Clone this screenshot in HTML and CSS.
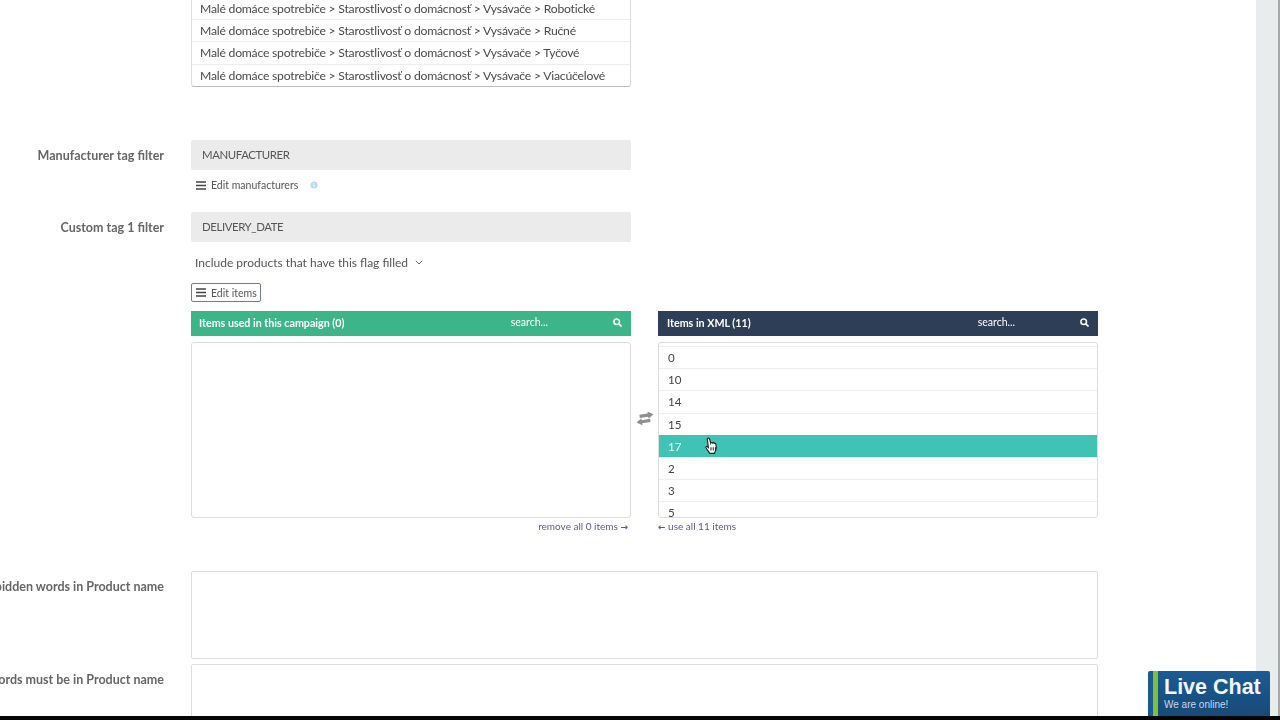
FILE: index.html
```html
<!DOCTYPE html>
<html lang="en">
<head>
	<meta charset="UTF-8">
	<title>Campaign filters</title>
	<link rel="stylesheet" href="styles.css">
</head>
<body>
<div class="screen">
	<div class="page">
		<div class="field field-cats">
			<div class="field-label"></div>
			<ul class="cat-list">
				<li>Malé domáce spotrebiče &gt; Starostlivosť o domácnosť &gt; Vysávače &gt; Robotické</li>
				<li>Malé domáce spotrebiče &gt; Starostlivosť o domácnosť &gt; Vysávače &gt; Ručné</li>
				<li>Malé domáce spotrebiče &gt; Starostlivosť o domácnosť &gt; Vysávače &gt; Tyčové</li>
				<li>Malé domáce spotrebiče &gt; Starostlivosť o domácnosť &gt; Vysávače &gt; Viacúčelové</li>
			</ul>
		</div>

		<div class="field field-manufacturer">
			<div class="field-label"><span>Manufacturer tag filter</span></div>
			<div class="field-body">
				<div class="tag-input">MANUFACTURER</div>
				<div class="edit-link">
					<svg class="icon-bars" width="10" height="9" viewBox="0 0 10 9"><path d="M0 1h10M0 4.500h10M0 8h10" stroke="#444" stroke-width="1.400"/></svg>
					<span>Edit manufacturers</span>
					<svg class="icon-info" width="8" height="8" viewBox="0 0 8 8"><circle cx="4" cy="4" r="3.500" fill="#b9dcf0"/><path d="M4 2v.8M4 3.400V6" stroke="#fff" stroke-width="1"/></svg>
				</div>
			</div>
		</div>

		<div class="field field-custom">
			<div class="field-label"><span>Custom tag 1 filter</span></div>
			<div class="field-body">
				<div class="tag-input">DELIVERY_DATE</div>
				<div class="flag-select">
					<span>Include products that have this flag filled</span>
					<svg width="8" height="5" viewBox="0 0 8 5"><path d="M.8.8L4 4l3.200-3.200" fill="none" stroke="#666" stroke-width="1"/></svg>
				</div>
				<div class="edit-btn">
					<svg class="icon-bars" width="10" height="9" viewBox="0 0 10 9"><path d="M0 1h10M0 4.500h10M0 8h10" stroke="#444" stroke-width="1.400"/></svg>
					<span>Edit items</span>
				</div>
			</div>
		</div>

		<div class="transfer">
			<div class="transfer-side">
				<div class="list-head head-green">
					<b>Items used in this campaign (0)</b>
					<span class="head-search">search...</span>
					<svg width="9" height="9" viewBox="0 0 9 9"><circle cx="3.700" cy="3.700" r="2.800" fill="none" stroke="#fff" stroke-width="1.500"/><path d="M5.800 5.800L8.500 8.500" stroke="#fff" stroke-width="1.700"/></svg>
				</div>
				<div class="list-box"></div>
				<div class="list-action action-right">remove all 0 items <span class="arrow">→</span></div>
			</div>
			<div class="transfer-mid">
				<svg width="18" height="13" viewBox="0 0 18 13"><g transform="rotate(-9 9 6.500)"><path d="M18 3.600L12.500 0v2H4v3.200h8.500v2zM0 9.200L5.500 5.600v2H14v3.200H5.500v2z" fill="#8f8f8f"/></g></svg>
			</div>
			<div class="transfer-side">
				<div class="list-head head-navy">
					<b>Items in XML (11)</b>
					<span class="head-search">search...</span>
					<svg width="9" height="9" viewBox="0 0 9 9"><circle cx="3.700" cy="3.700" r="2.800" fill="none" stroke="#fff" stroke-width="1.500"/><path d="M5.800 5.800L8.500 8.500" stroke="#fff" stroke-width="1.700"/></svg>
				</div>
				<div class="list-box">
					<ul class="item-list">
						<li>0</li>
						<li>10</li>
						<li>14</li>
						<li>15</li>
						<li class="active">17</li>
						<li>2</li>
						<li>3</li>
						<li>5</li>
					</ul>
				</div>
				<div class="list-action"><span class="arrow">←</span> use all 11 items</div>
			</div>
		</div>

		<div class="field field-words">
			<div class="field-label"><span>Forbidden words in Product name</span></div>
			<div class="word-box"></div>
		</div>
		<div class="field field-words2">
			<div class="field-label"><span>Words must be in Product name</span></div>
			<div class="word-box"></div>
		</div>
	</div>
	<div class="scroll-track"></div>
	<div class="scroll-edge"></div>

	<svg class="cursor" width="16" height="18" viewBox="0 0 14 16"><path d="M4 1.200c.8-.6 1.600 0 1.800.8l.9 3.400c.2-.7 1.300-.8 1.600 0 .3-.5 1.300-.5 1.500.2.400-.3 1.300-.2 1.500.6.400 1.500.5 3.400.1 5-.3 1.300-1 2-1.200 3.400H5.800c-.5-1.500-2-3-3.300-5-.5-.8.300-1.600 1.200-1l1 .9L3.800 2.600c-.2-.6-.2-1.100.2-1.400z" fill="#fff" stroke="#222" stroke-width="1"/><path d="M7 9v3M9 9v3M11 9v3" stroke="#222" stroke-width=".9"/></svg>

	<div class="live-chat">
		<div class="chat-title">Live Chat</div>
		<div class="chat-sub">We are online!</div>
	</div>
</div>
<div class="video-edge"></div>
</body>
</html>
```

FILE: styles.css
```css
*{
	margin: 0;
	padding: 0;
	box-sizing: border-box;
}
li{list-style: none}
body{
	width: 1280px;
	height: 720px;
	overflow: hidden;
	background: #000;
	font-family: "Lato", "Liberation Sans", sans-serif;
	font-size: 12px;
	color: #555;
}
.screen{
	position: relative;
	display: flex;
	height: 716px;
	overflow: hidden;
	background: #fff;
}
.page{
	width: 1256px;
	flex: none;
	filter: blur(.3px);
}
.scroll-track{
	width: 22px;
	background: #e8eced;
}
.scroll-edge{
	width: 2px;
	background: #a8a8a8;
}
.video-edge{
	height: 4px;
	background: #050505;
}

.field{
	display: flex;
	gap: 27px;
}
.field-label{
	width: 164px;
	flex: none;
	display: flex;
	justify-content: flex-end;
	white-space: nowrap;
	font-size: 12.500px;
	font-weight: bold;
	color: #666;
}
.field-label span{flex: none}
.field-body{width: 440px}

.field-cats{margin-top: -3px}
.cat-list{
	width: 440px;
	height: 90px;
	padding-top: 1px;
	border: 1px solid #ddd;
	border-top: 0;
	border-bottom: 1px solid #bbb;
	border-radius: 0 0 3px 3px;
	background: #fff;
}
.cat-list li{
	height: 22.200px;
	line-height: 22px;
	padding-left: 8px;
	font-size: 12.200px;
	letter-spacing: -.22px;
	color: #4a4a4a;
	white-space: nowrap;
	border-bottom: 1px solid #eee;
}
.cat-list li:last-child{border-bottom: 0}

.field-manufacturer{margin-top: 53px}
.field-manufacturer .field-label{padding-top: 8px}
.field-custom{margin-top: 12px}
.field-custom .field-label{padding-top: 8px}
.tag-input{
	height: 30px;
	line-height: 30px;
	padding-left: 11px;
	background: #ebebeb;
	border-radius: 2px;
	font-size: 11.400px;
	letter-spacing: -.4px;
	color: #555;
}
.edit-link{
	display: flex;
	align-items: center;
	height: 30px;
	padding-left: 5px;
	font-size: 10.500px;
	color: #555;
}
.icon-bars{flex: none}
.edit-link span{margin-left: 5px}
.icon-info{margin-left: 12px}
.flag-select{
	display: flex;
	align-items: center;
	gap: 7px;
	height: 40px;
	padding-left: 4px;
	font-size: 12px;
	color: #555;
}
.edit-btn{
	display: flex;
	align-items: center;
	width: 70px;
	height: 19px;
	margin-top: 1px;
	padding-left: 4px;
	border: 1px solid #6f7f92;
	border-radius: 2px;
	font-size: 10.500px;
	color: #555;
}
.edit-btn span{margin-left: 5px}

.transfer{
	display: flex;
	margin: 9px 0 0 191px;
}
.transfer-side{width: 440px}
.transfer-mid{
	width: 27px;
	padding: 101px 0 0 5px;
}
.list-head{
	display: flex;
	align-items: center;
	height: 25px;
	padding: 0 9px 2px 8px;
	color: #fff;
	font-size: 10.700px;
}
.head-green{background: #3cb58a}
.head-navy{
	background: #2d3e56;
	padding-left: 9px;
}
.head-search{
	margin-left: auto;
	margin-right: 65px;
	margin-top: -2px;
	font-size: 10.500px;
}
.list-box{
	height: 176px;
	margin-top: 6px;
	border: 1px solid #ddd;
	border-radius: 3px;
	overflow: hidden;
	background: #fff;
}
.item-list{padding-top: 3px}
.item-list li{
	height: 22.200px;
	line-height: 22px;
	padding-left: 9px;
	font-size: 11.600px;
	color: #444;
	border-top: 1px solid #eee;
}
.item-list li.active{
	background: #40c2b5;
	border-top-color: #40c2b5;
	color: #eefbf9;
}
.list-action{
	height: 16px;
	line-height: 16px;
	font-size: 10px;
	color: #5f5a92;
}
.action-right{
	text-align: right;
	padding-right: 3px;
}
.arrow{
	font-family: "DejaVu Sans", sans-serif;
	font-size: 9px;
	font-weight: bold;
}

.field-words{margin-top: 37px}
.field-words .field-label{padding-top: 8px}
.field-words2{margin-top: 5px}
.field-words2 .field-label{padding-top: 8px}
.word-box{
	width: 907px;
	height: 88px;
	border: 1px solid #ddd;
	border-radius: 2px;
	background: #fff;
}

.cursor{
	position: absolute;
	left: 703px;
	top: 437px;
}
.live-chat{
	position: absolute;
	left: 1148px;
	top: 671px;
	width: 122px;
	height: 45px;
	padding: 4px 0 0 11px;
	border-left: 5px solid #1b5b94;
	border-radius: 2px 2px 0 0;
	background: linear-gradient(#1b5b94, #174a78);
	box-shadow: inset 5px 0 0 #7cc234;
	color: #f0f6fb;
	font-family: "Liberation Sans", sans-serif;
}
.chat-title{
	font-size: 21.500px;
	line-height: 24px;
	font-weight: bold;
}
.chat-sub{
	font-size: 10px;
	line-height: 12px;
	color: #c6d8e8;
}
```
